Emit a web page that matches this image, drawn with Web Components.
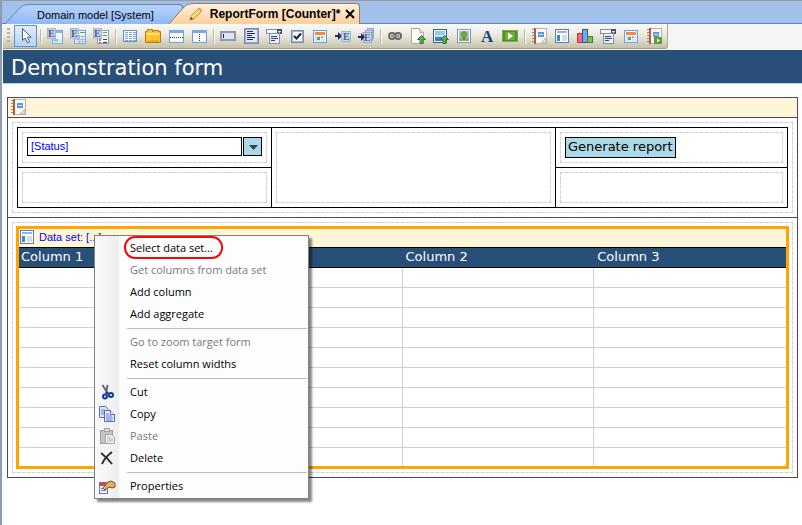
<!DOCTYPE html>
<html lang="en">
<head>
<meta charset="utf-8">
<title>ReportForm [Counter]</title>
<style>
  body { margin: 0; background: #fff; font-family: "Liberation Sans", Arial, sans-serif; font-size: 11px; color: #000; }
</style>
</head>
<body>
<form-editor></form-editor>

<script>
/* ---------- icons, drawn on a 16 x 16 grid ---------- */
const box = (x, y, w, h, fill, stroke) =>
  `<rect x="${x + .5}" y="${y + .5}" width="${w - 1}" height="${h - 1}" fill="${fill}" stroke="${stroke}"/>`;
const bar = (x, y, w, h, fill) => `<rect x="${x}" y="${y}" width="${w}" height="${h}" fill="${fill}"/>`;
const letter = (t, x, y, size, fill) =>
  `<text x="${x}" y="${y}" font-family="Liberation Serif" font-weight="bold" font-size="${size}" fill="${fill}">${t}</text>`;
const eTile = box(0, 0, 9, 11, '#c3d3ea', '#a3b7d6') + letter('E', 1, 9, 10, '#51617f');
const calendar = box(1, 2, 14, 13, '#eef5ff', '#6f9cdc') + bar(3, 4, 10, 3, '#f58a3c') +
  bar(3, 8, 10, 5, '#c4d5ee') + bar(5, 8, 1, 5, '#fff') + bar(8, 8, 1, 5, '#fff') + bar(11, 8, 1, 5, '#fff') +
  bar(3, 10, 10, 1, '#fff') + bar(5, 9, 3, 3, '#56a862') + bar(9, 9, 2, 1, '#56a862');
const notebook = box(3, 0, 13, 16, '#f8f9fc', '#b9b4ac') + bar(3, 0, 2, 16, '#b65a38') +
  bar(1, 1, 2, 1, '#8f8a84') + bar(1, 4, 2, 1, '#8f8a84') + bar(1, 7, 2, 1, '#8f8a84') + bar(1, 10, 2, 1, '#8f8a84') + bar(1, 13, 2, 1, '#8f8a84') +
  bar(7, 4, 6, 5, '#5e97e6') + bar(8, 6, 4, 1, '#d7e7fd');
const upArrow = '<path d="M11.500 7.500l4 4h-2.500v4h-3v-4h-2.500z" fill="#5fb04e" stroke="#2d7a32"/>';
const listHead = box(0, 1, 16, 5, '#f7f8fd', '#7b8ca8') + bar(11, 1, 5, 5, '#3e5475') + '<path d="M12 3h3l-1.500 2z" fill="#fff"/>' +
  box(3, 5, 11, 11, '#eceffb', '#8190ad') + bar(5, 8, 6, 1, '#34405c') + bar(5, 10, 7, 1, '#34405c') + bar(5, 12, 4, 1, '#34405c');
const miniPlay = bar(8, 9, 8, 7, '#5d9c2e') + '<path d="M11 10.500v4l3-2z" fill="#fff"/>';

const ICONS = {
  pointer: '<path d="M4.500 .5v12l2.700-2.500 2.200 4.800 2.200-1-2.200-4.600h3.800z" fill="#fff" stroke="#4c5d78"/>',
  dataView: box(5, 2, 11, 14, '#f1f6ff', '#7da3da') + bar(9, 3, 6, 2, '#8db4ea') + bar(7, 11, 4, 3, '#9bbdec') + bar(12, 11, 2, 3, '#cbdcf5') + eTile,
  dataGrid: box(4, 2, 12, 14, '#f1f6ff', '#7da3da') + bar(10, 4, 5, 1, '#62a364') + bar(6, 11, 9, 1, '#9bbdec') + bar(6, 13, 9, 1, '#9bbdec') + bar(9, 7, 1, 8, '#9bbdec') + bar(12, 7, 1, 8, '#9bbdec') + bar(9, 8, 6, 1, '#9bbdec') + eTile,
  dataTree: box(4, 2, 12, 14, '#f4f6fa', '#8b9fba') + bar(10, 4, 4, 1, '#62a364') + bar(10, 7, 4, 1, '#62a364') + bar(6, 11, 2, 2, '#be8a31') + bar(10, 11, 4, 1, '#3b3b3b') + bar(6, 14, 2, 1, '#b33d2a') + bar(10, 14, 4, 1, '#3b3b3b') + eTile,
  table: box(1, 2, 14, 12, '#f8fbff', '#5f8fd6') + [3, 7, 11].map(x => [4, 6, 8, 10, 12].map(y => bar(x, y, 3, 1, '#7ba4e2')).join('')).join(''),
  folder: '<path d="M.5 3.500h2v-2h5v2h1v-1h5v1h2v11h-15z" fill="#fcc52f" stroke="#b67a10"/><path d="M2 5h12v2H2z" fill="#ffe27e"/><path d="M2 12h12v2H2z" fill="#f5a90d"/>',
  rowSplit: box(1, 2, 15, 13, '#f8fafe', '#7c9ccc') + bar(1, 2, 15, 3, '#7ea7e2') + [2, 4, 6, 8, 10, 12, 14].map(x => bar(x, 9, 1, 1, '#333')).join(''),
  colSplit: box(1, 2, 15, 13, '#f8fafe', '#6f9bdb') + bar(1, 2, 15, 3, '#7ea7e2') + [6, 8, 10, 12].map(y => bar(8, y, 1, 1, '#333')).join(''),
  textBox: box(0, 3, 16, 10, '#d7dcf7', '#8b98b1') + box(1, 4, 14, 8, '#e0e4fa', '#8e9ab4') + bar(3, 6, 1, 4, '#222'),
  textArea: box(1, 0, 15, 16, '#c3cdea', '#7a8cb0') + box(2, 1, 13, 14, '#e4e9fc', '#97a6c6') + bar(4, 3, 6, 1, '#1f2c4e') + bar(4, 5, 8, 1, '#1f2c4e') + bar(4, 7, 5, 1, '#1f2c4e') + bar(4, 9, 8, 1, '#1f2c4e') + bar(4, 11, 6, 1, '#1f2c4e'),
  dropDown: listHead,
  checkBox: box(2, 2, 13, 13, '#c9d3ea', '#7a8cb0') + box(3, 3, 11, 11, '#f4f6fd', '#a5b2cf') + '<path d="M5 8l2.500 2.500 4.500-5" fill="none" stroke="#222" stroke-width="2"/>',
  datePicker: calendar,
  refOne: '<path d="M0 7h3V4l4 4-4 4V9H0z" fill="#26246b"/>' + box(6, 3, 10, 11, '#c8d6eb', '#9fb5d6') + letter('E', 8, 12, 10, '#51617f'),
  refMany: box(9, 0, 7, 11, '#b9cbe5', '#8ea8cf') + box(7, 2, 8, 11, '#c3d3ea', '#8ea8cf') + box(5, 4, 9, 11, '#d2deef', '#8ea8cf') + letter('E', 6, 13, 10, '#51617f') + '<path d="M0 8h3V5l4 4-4 4v-3H0z" fill="#26246b"/>',
  link: '<g fill="none" stroke="#66686a" stroke-width="2"><rect x="2" y="5" width="6" height="6" rx="3"/><rect x="8" y="5" width="6" height="6" rx="3"/></g><path d="M4 8h8" stroke="#8d8d8d" stroke-width="2"/>',
  pageUp: '<path d="M1.500 .5h8l4 4v11h-12z" fill="#fff" stroke="#a6a6a6"/><path d="M9.500.5v4h4" fill="#e3e3e3" stroke="#b5b5b5"/>' + upArrow,
  imageUp: box(0, 1, 14, 14, '#fff', '#315f9e') + bar(2, 3, 10, 5, '#8ecbf2') + bar(2, 8, 10, 5, '#3f80bd') + '<path d="M2 8c3-3 6 1 10-2v3H2z" fill="#c8e8fa"/>' + upArrow,
  picture: box(1, 1, 14, 14, '#fff', '#7b98c2') + bar(3, 3, 10, 7, '#9fc8ee') + bar(3, 10, 10, 3, '#87b35c') + '<circle cx="8" cy="6.500" r="3.500" fill="#6aab3c"/>' + bar(7, 9, 2, 3, '#9a6a34'),
  label: letter('A', 2, 14, 17, '#1d3f7e'),
  play: box(0, 2, 16, 12, '#4f8f28', '#77ae50') + bar(3, 4, 10, 8, '#6eac40') + '<path d="M6 4.500v7l5-3.500z" fill="#fff"/>',
  report: notebook + '<path d="M10 15l5-5v5z" fill="#dfe3ea" stroke="#b9b4ac"/>',
  view: box(1, 1, 14, 14, '#fff', '#4f7fc0') + bar(3, 3, 10, 2, '#8db5ec') + bar(3, 7, 3, 6, '#4b7fc9') + bar(8, 7, 5, 6, '#cfdff6'),
  chart: box(0, 5, 6, 10, '#ee6f72', '#c92e36') + box(5, 1, 6, 14, '#74a8ee', '#2458b0') + box(10, 8, 6, 7, '#7fbb63', '#3b8136'),
  reportList: listHead,
  reportDate: calendar,
  reportPlay: notebook + miniPlay,
  pencil: '<path d="M2 14l1-4L11 2l3 3-8 8z" fill="#f9cf52" stroke="#c79a48"/><path d="M10 3l3 3 1.500-1.500L12 1.500z" fill="#ef9b7a"/><path d="M2 14l1-3 2 2z" fill="#5a4630"/><path d="M4.500 11L11 4.500" stroke="#fff2b8"/>',
  close: '<path d="M4 4l8 8M12 4l-8 8" stroke="#000" stroke-width="2"/>',
  cut: '<path d="M3.500 1l5.500 9M8.500 1L7 10" stroke="#62697a" stroke-width="2" fill="none"/><g fill="none" stroke="#153a9a" stroke-width="2"><circle cx="6" cy="12.500" r="2"/><circle cx="12" cy="11" r="2"/></g><path d="M7 8l3 2" stroke="#153a9a" stroke-width="2"/>',
  copy: '<g fill="#dde8fb" stroke="#6068ab"><path d="M.5.5h6l3 3v8h-9z"/><path d="M5.500 4.500h6l4 4v7h-10z"/><path d="M11.500 4.500v4h4" fill="#fff"/></g><path d="M2 4h4M2 6h3M2 8h3M7 8h3M7 10h6M7 12h7M7 14h6" stroke="#5f86c9"/>',
  paste: box(1, 2, 13, 14, '#c5c5c5', '#a0a0a0') + box(5, 0, 6, 4, '#e0e0e0', '#a0a0a0') + '<path d="M6.500 6.500h6l3 3v6h-9z" fill="#f4f4f4" stroke="#a5a5a5"/><path d="M8 9h4M8 11h6M8 13h6" stroke="#b5b5b5"/>',
  remove: '<path d="M2 3c4 3 8 7 11 11M13 2C9 5 5 9 3 14" stroke="#2d2f33" stroke-width="2" fill="none"/>',
  properties: box(0, 4, 9, 12, '#f5f6fc', '#6d75a8') + bar(1, 5, 7, 3, '#d6453e') + bar(2, 10, 3, 1, '#6d75a8') + bar(2, 12, 5, 1, '#6d75a8') + '<path d="M4 10l5-6 3-1 4 2v4l-3 1-3-1-4 3z" fill="#e3b066" stroke="#7a5120"/>',
  triangle: '<path d="M4 6h9l-4.500 5z" fill="#2f4550"/>'
};

class UiIcon extends HTMLElement {
  connectedCallback() {
    this.attachShadow({ mode: 'open' }).innerHTML = `
      <style>:host { display: block; flex: none; width: 16px; height: 16px } svg { display: block; overflow: visible }</style>
      <svg width="16" height="16" viewBox="0 0 16 16" aria-hidden="true">${ICONS[this.getAttribute('name')]}</svg>`;
  }
}
customElements.define('ui-icon', UiIcon);

/* Base class: renders the subclass's static html into an open shadow root. */
class Block extends HTMLElement {
  constructor() {
    super();
    this.attachShadow({ mode: 'open' }).innerHTML =
      '<style>* { box-sizing: border-box } button { font: inherit; color: inherit; border: 0; padding: 0; background: none }</style>' + this.constructor.html;
  }
}

/* Document tab with a slanted left edge */
customElements.define('doc-tab', class extends Block {
  static html = `
    <style>
      :host { display: flex; align-items: stretch; height: 20px; --top: #b9d3fb; --low: #8fb9f7; --line: #5f86bd }
      :host([active]) { margin-left: -14px; height: 21px; --top: #fff1e0; --low: #fecf9c; --line: #9a7a58 }
      .cap { display: block; flex: none; width: 24px; height: 100% }
      .body { display: flex; align-items: center; gap: 6px; padding: 0 28px 0 8px; border: solid var(--line); border-width: 1px 1px 0 0;
              border-radius: 0 4px 0 0; background: linear-gradient(var(--top), var(--low)) }
      :host([active]) .body { padding: 0 1px 0 0 }
      button { white-space: nowrap; line-height: 14px }
      :host([active]) .name { font-weight: bold; font-size: 12px }
      .icon, .close { display: none }
      :host([active]) .icon, :host([active]) .close { display: block }
      .icon { margin-left: -5px }
      .close { margin-left: -4px }
    </style>
    <svg class="cap" viewBox="0 0 24 21" preserveAspectRatio="none">
      <defs><linearGradient id="g" x2="0" y2="1"><stop style="stop-color:var(--top)"/><stop offset="1" style="stop-color:var(--low)"/></linearGradient></defs>
      <path d="M0 21L15 4Q18 .5 24 .5V21z" fill="url(#g)"/><path d="M0 21L15 4Q18 .5 24 .5" fill="none" style="stroke:var(--line)"/>
    </svg>
    <div class="body">
      <ui-icon class="icon" name="pencil"></ui-icon>
      <button class="name" role="tab"><slot></slot></button>
      <button class="close" aria-label="Close"><ui-icon name="close"></ui-icon></button>
    </div>`;
});

customElements.define('tool-bar', class extends Block {
  static html = `
    <style>
      :host { display: flex; align-items: stretch; width: max-content; height: 25px; padding-right: 2px;
              background: linear-gradient(#fbfaf7, #e9e7dc 50%, #c4c2ac); border-bottom: 1px solid #a3a27c; border-right: 1px solid #aaa98f; border-radius: 0 0 3px 0 }
      .grip { width: 3px; margin: 4px 4px; background: repeating-linear-gradient(#b5b3a4 0 2px, transparent 2px 4px) }
      button { width: 23px; display: grid; place-items: center; border: 1px solid transparent }
      button[aria-pressed=true] { border-color: #5c93d8; background: linear-gradient(#e0eefc, #b5d3f7); margin: 1px 0 }
      i { width: 2px; margin: 5px 1px 4px 3px; background: #b9b7a0; border-right: 1px solid #fff }
    </style>
    <span class="grip"></span>` +
    [['pointer'], ['dataView', 'dataGrid', 'dataTree'], ['table', 'folder', 'rowSplit', 'colSplit'],
     ['textBox', 'textArea', 'dropDown', 'checkBox', 'datePicker', 'refOne', 'refMany'],
     ['link', 'pageUp', 'imageUp', 'picture', 'label', 'play'],
     ['report', 'view', 'chart', 'reportList', 'reportDate', 'reportPlay']]
      .map(g => g.map(n => `<button aria-label="${n}" aria-pressed="${n === 'pointer'}"><ui-icon name="${n}"></ui-icon></button>`).join(''))
      .join('<i></i>');
});

/* Dashed drop area of the form designer */
customElements.define('drop-zone', class extends Block {
  static html = `
    <style>
      :host { display: block; box-sizing: border-box; border: 1px dashed #cfcfcf; padding: 4px;
              background: linear-gradient(#fff, #fff) padding-box, linear-gradient(#ececec, #ececec) border-box }
    </style><slot></slot>`;
});

customElements.define('layout-table', class extends Block {
  static html = `
    <style>
      :host { display: grid; grid-template-columns: 253fr 283fr 231fr; grid-auto-rows: minmax(39px, auto); gap: 1px; background: #000; border: 1px solid #000 }
      .cell { display: grid; background: #fff; padding: 4px }
      .tall { grid-row: span 2 }
      .combo { display: flex; gap: 1px }
      input { flex: 1; min-width: 0; height: 19px; border: 1px solid #000; padding: 0 3px 1px; font: inherit; color: #00f; background: #fff; border-radius: 0 }
      .combo button { width: 19px; height: 19px; border: 1px solid #000; background: #add8e6; display: grid; place-items: center }
      .run { height: 21px; padding: 0 2px 1px; border: 1px solid #000; background: #add8e6; font: 13px/18px "DejaVu Sans", Verdana, sans-serif; white-space: nowrap }
    </style>
    <div class="cell"><drop-zone><div class="combo"><input aria-label="Status" value="[Status]"><button aria-label="Open list"><ui-icon name="triangle"></ui-icon></button></div></drop-zone></div>
    <div class="cell tall"><drop-zone></drop-zone></div>
    <div class="cell"><drop-zone><button class="run">Generate report</button></drop-zone></div>
    <div class="cell"><drop-zone></drop-zone></div>
    <div class="cell"><drop-zone></drop-zone></div>`;
});

customElements.define('data-grid', class extends Block {
  static html = `
    <style>
      :host { display: block; border: 3px solid #ffa500; background: #fff }
      .source { display: flex; align-items: center; gap: 4px; height: 18px; padding: 0 0 2px; background: #fff6da; color: #00f }
      table { width: 100%; table-layout: fixed; border-collapse: separate; border-spacing: 0 }
      th { height: 21px; padding: 0 0 1px 2px; text-align: left; background: #284f78; color: #fff; border: solid #000; border-width: 1px 0;
           font: 13px/16px "DejaVu Sans", Verdana, sans-serif }
      th + th { padding-left: 3px }
      th:first-child { width: 50% }
      td { height: 20px; padding: 0; border: solid #d0d0d0; border-width: 0 1px 1px 0 }
      td:last-child { border-right: 0 }
      tr:last-child td { height: 18px; border-bottom: 0 }
    </style>
    <div class="source"><ui-icon name="view"></ui-icon><span>Data set: [...]</span></div>
    <table>
      <thead><tr><th>Column 1</th><th>Column 2</th><th>Column 3</th></tr></thead>
      <tbody>${'<tr><td></td><td></td><td></td></tr>'.repeat(10)}</tbody>
    </table>`;
});

customElements.define('menu-item', class extends Block {
  static html = `
    <style>
      :host { display: block }
      button { display: flex; align-items: center; width: 100%; height: 22px; padding-left: 4px; text-align: left }
      .icon { width: 31px; flex: none }
      .name { position: relative; white-space: nowrap; line-height: 16px }
      :host([disabled]) .name { color: #7a7a7a }
      :host([marked]) .name::after { content: ""; position: absolute; inset: -4px -10px -3px -6px; border: 2px solid #f40808; border-radius: 11px }
    </style>
    <button role="menuitem"><span class="icon"><slot name="icon"></slot></span><span class="name"><slot></slot></span></button>`;
});

customElements.define('context-menu', class extends Block {
  static html = `
    <style>
      :host { display: block; box-sizing: border-box; width: 215px; padding: 1px 0; border: 1px solid #808080;
              background: linear-gradient(90deg, #fafafa, #eeeeee) 0 0 / 24px 100% no-repeat #fdfdfd;
              box-shadow: 3px 3px 2px #0007; font: 11px "Open Sans", "Segoe UI", sans-serif }
      ::slotted(hr) { height: 1px; margin: 3px 1px 2px 32px; border: 0; background: #bdbdbd }
    </style>
    <slot></slot>`;
});

customElements.define('form-editor', class extends Block {
  static html = `
    <style>
      :host { display: block; position: relative; box-sizing: border-box; min-height: 100vh; border-left: 1px solid #9c9c9c; border-top: 1px solid #9c9c9c }
      .page { min-height: calc(100vh - 1px); border-left: 1px solid #7b9bd0 }
      .tabs { display: flex; align-items: flex-end; height: 23px; padding-left: 3px; background: #a2c1ea; box-shadow: inset 0 -1px #5f86c5 }
      .tools { background: #f5f5f5; padding: 0 0 1px 1px }
      h1 { margin: 0 0 0 1px; height: 34px; padding: 1px 0 0 8px; border-bottom: 1px solid #b9cde0; background: #284f78; color: #fff;
           font: 21px/34px "DejaVu Sans", Verdana, sans-serif }
      .frame { margin: 13px 4px 8px 5px; border: 1px solid #484860 }
      .strip { height: 20px; padding: 1px 2px; background: #fff6da; border-bottom: 1px solid #484860 }
      .section { padding: 4px }
      .section + .section { border-top: 1px solid #484860 }
      .grid { padding: 3px }
      context-menu { position: absolute; left: 93px; top: 234px }
    </style>
    <div class="page">
      <div class="tabs" role="tablist"><doc-tab>Domain model [System]</doc-tab><doc-tab active>ReportForm [Counter]*</doc-tab></div>
      <div class="tools"><tool-bar role="toolbar"></tool-bar></div>
      <h1>Demonstration form</h1>
      <div class="frame">
        <div class="strip"><ui-icon name="report"></ui-icon></div>
        <div class="section"><drop-zone><layout-table></layout-table></drop-zone></div>
        <div class="section"><drop-zone class="grid"><data-grid></data-grid></drop-zone></div>
      </div>
    </div>
    <context-menu role="menu">
      <menu-item marked>Select data set...</menu-item>
      <menu-item disabled>Get columns from data set</menu-item>
      <menu-item>Add column</menu-item>
      <menu-item>Add aggregate</menu-item>
      <hr>
      <menu-item disabled>Go to zoom target form</menu-item>
      <menu-item>Reset column widths</menu-item>
      <hr>
      <menu-item><ui-icon slot="icon" name="cut"></ui-icon>Cut</menu-item>
      <menu-item><ui-icon slot="icon" name="copy"></ui-icon>Copy</menu-item>
      <menu-item disabled><ui-icon slot="icon" name="paste"></ui-icon>Paste</menu-item>
      <menu-item><ui-icon slot="icon" name="remove"></ui-icon>Delete</menu-item>
      <hr>
      <menu-item><ui-icon slot="icon" name="properties"></ui-icon>Properties</menu-item>
    </context-menu>`;
});
</script>
</body>
</html>
